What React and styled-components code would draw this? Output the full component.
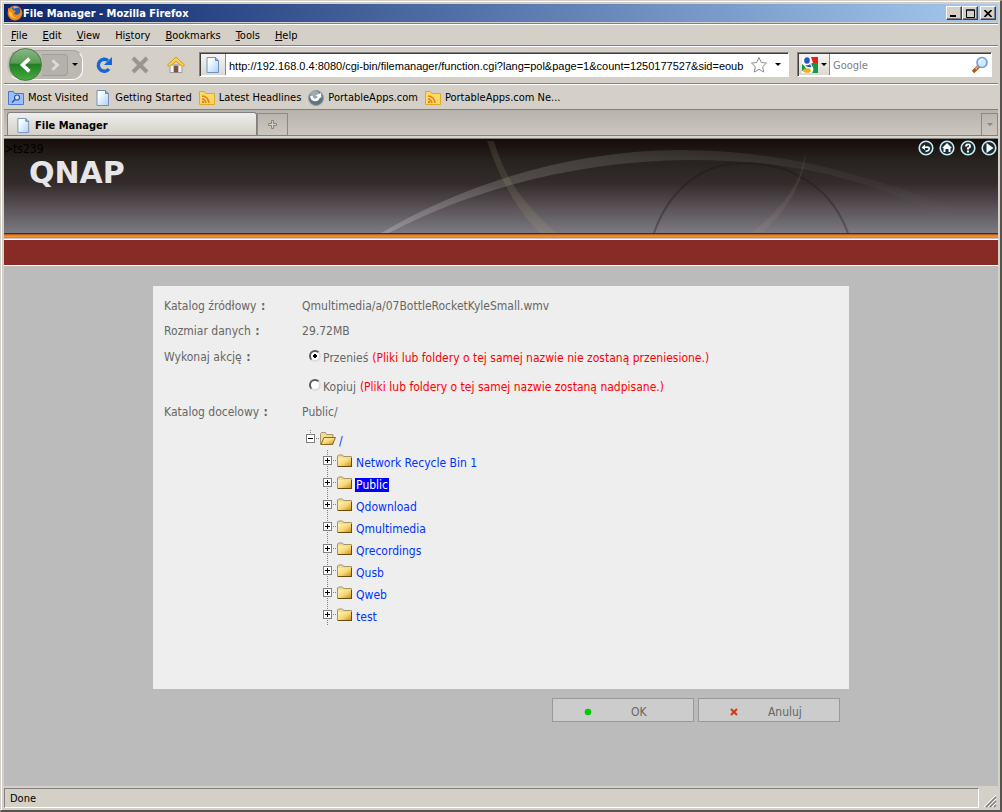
import { useState } from "react";
import styled, { createGlobalStyle } from "styled-components";

const GlobalStyle = createGlobalStyle`
  * {
    box-sizing: border-box;
  }

  body {
    margin: 0;
    background-color: #d4d0c8;
    font-family: "DejaVu Sans Condensed", "DejaVu Sans", sans-serif;
    font-size: 11px;
    color: #000;
  }

  button,
  input {
    font: inherit;
    color: inherit;
    margin: 0;
    padding: 0;
  }

  button {
    border: none;
    background: none;
  }

  svg {
    display: block;
    flex: none;
  }
`;

const Window = styled.div`
  min-height: 100vh;
  display: flex;
  flex-direction: column;
  padding: 3px 2px 2px 3px;
  background-color: #d4d0c8;
  border-style: solid;
  border-width: 1px 2px 2px 1px;
  border-color: #d4d0c8 #55524f #55524f #d4d0c8;
  box-shadow: inset 1px 1px 0 #fff;
`;

const TitleBar = styled.header`
  height: 18px;
  display: flex;
  align-items: center;
  padding: 0 2px 0 3px;
  background: linear-gradient(to right, #0a246a, #a6caf0);
`;

const Title = styled.h1`
  flex: 1;
  margin: 0;
  font-size: 11px;
  font-weight: bold;
  color: #fff;
`;

const CaptionButton = styled.button`
  width: 16px;
  height: 14px;
  display: grid;
  place-items: center;
  background-color: #d4d0c8;
  border: 1px solid;
  border-color: #fff #404040 #404040 #fff;
  box-shadow: inset -1px -1px 0 #808080;
  margin-left: ${(props) => (props.$apart ? "2px" : "0")};
`;

const Bar = styled.div`
  display: flex;
  align-items: center;
  border-bottom: 1px solid #808080;
  box-shadow: inset 0 1px 0 #fff;
`;

const MenuBar = styled(Bar)`
  height: 23px;
  margin-top: 1px;
  padding: 2px 0 0 7px;
  gap: 15px;
  border-top: 1px solid #808080;
`;

const MenuItem = styled.button`
  &::first-letter {
    text-decoration: underline;
  }
`;

const NavBar = styled(Bar)`
  height: 38px;
  padding: 0 6px 0 3px;
`;

const BackForward = styled.div`
  width: 76px;
  height: 30px;
  display: flex;
  align-items: center;
  background-color: #bcb8b2;
  border: 1px solid;
  border-color: #a5a29c #fff #fff #c8c4bc;
  border-radius: 14px 10px 10px 14px;
`;

const BackButton = styled.button`
  width: 33px;
  height: 33px;
  flex: none;
  display: grid;
  place-items: center;
  margin-left: 1px;
  border: 1px solid #467a45;
  border-radius: 50%;
  background: linear-gradient(#88b884, #5a9b56 45%, #237f22 50%, #43ab40);
`;

const ForwardButton = styled.button`
  width: 26px;
  height: 22px;
  display: grid;
  place-items: center;
  background-color: #b4b0aa;
  border: 1px solid #a19e98;
  border-left: none;
  border-radius: 0 4px 4px 0;
`;

const DropButton = styled.button`
  width: ${(props) => props.$width || 14}px;
  height: 22px;
  display: grid;
  place-items: center;
`;

const ToolGroup = styled.div`
  display: flex;
  gap: 16px;
  margin: 0 13px 0 11px;
`;

const ToolButton = styled.button`
  width: 20px;
  height: 20px;
  display: grid;
  place-items: center;
`;

const Field = styled.div`
  height: 25px;
  display: flex;
  align-items: center;
  background-color: #fff;
  border: 1px solid;
  border-color: #808080 #fff #fff #808080;
  box-shadow: inset 1px 1px 0 #404040;
`;

const AddressField = styled(Field)`
  flex: 1;
  margin-right: 8px;
`;

const SearchField = styled(Field)`
  width: 195px;
  padding-right: 2px;
`;

const FieldIcon = styled.div`
  height: 21px;
  width: ${(props) => props.$width}px;
  display: flex;
  flex: none;
  align-items: center;
  justify-content: center;
  gap: 3px;
  margin-left: 1px;
  background: linear-gradient(#f5f4f2, #dcd9d4);
  border-right: 1px solid #8c8984;
`;

const TextInput = styled.input`
  flex: 1;
  min-width: 0;
  border: none;
  outline: none;
  background: transparent;
  padding: 2px 3px 0;

  &::placeholder {
    color: #808080;
    opacity: 1;
  }
`;

const AddressInput = styled(TextInput)`
  font-family: "Liberation Sans", sans-serif;
`;

const BookmarkBar = styled(Bar)`
  height: 26px;
  padding: 2px 0 0 4px;
  gap: 7px;
`;

const Bookmark = styled.a`
  display: flex;
  align-items: center;
  gap: 4px;
  color: #000;
  text-decoration: none;
`;

const TabStrip = styled.div`
  height: 26px;
  display: flex;
  align-items: flex-end;
  padding-left: 3px;
  background: linear-gradient(#b7b3ac, #cbc7bf);
  border-bottom: 1px solid #808080;
`;

const Tab = styled.div`
  width: 250px;
  height: 23px;
  display: flex;
  align-items: center;
  gap: 4px;
  padding: 2px 0 0 8px;
  font-weight: bold;
  background: linear-gradient(#efeeec, #d4d0c8);
  border: 1px solid #808080;
  border-bottom: none;
  border-radius: 3px 3px 0 0;
`;

const TabButton = styled.button`
  width: ${(props) => props.$width}px;
  height: 22px;
  display: grid;
  place-items: center;
  border: 1px solid #8c8984;
  border-bottom: none;
  margin-left: ${(props) => (props.$end ? "auto" : "0")};
`;

const TabEdge = styled.div`
  height: 3px;
  background-color: #d8d5cf;
  border-bottom: 1px solid #808080;
`;

const Page = styled.main`
  flex: 1;
  background-color: #bbb;
  font-size: 12px;
  color: #666;
`;

const Banner = styled.div`
  height: 95px;
  display: grid;
  background: linear-gradient(#160b09, #26221e 22%, #342c2c 48%, #5c555a 75%, #7c7a82);
  border-bottom: 1px solid #30302f;
  overflow: hidden;

  > * {
    grid-area: 1 / 1;
  }
`;

const BannerContent = styled.div`
  z-index: 1;
  display: flex;
  justify-content: space-between;
  align-items: flex-start;
  padding: 1px 1px 0 0;
`;

const HostName = styled.div`
  height: 16px;
  line-height: 18px;
  color: #000;
`;

const Logo = styled.div`
  padding-left: 25px;
  font-family: "DejaVu Sans", sans-serif;
  font-size: 30px;
  font-weight: bold;
  line-height: 33px;
  color: #e6e6e8;
`;

const Shortcuts = styled.nav`
  display: flex;
  gap: 5px;
`;

const OrangeRule = styled.div`
  height: 6px;
  background: linear-gradient(#b4622c 0 1px, #ef7a20 1px 2px, #f89028 2px 3px, #b98a68 3px 4px, #c8c4d4 4px 5px, #fff 5px);
`;

const RedBar = styled.div`
  height: 26px;
  background-color: #882b26;
  border-bottom: 1px solid #fff;
`;

const Content = styled.form`
  width: 70%;
  min-width: 560px;
  margin: 20px auto 0;
`;

const Panel = styled.div`
  min-height: 403px;
  padding: 8px 11px;
  background-color: #eee;
`;

const Row = styled.div`
  display: grid;
  grid-template-columns: 138px 1fr;
  line-height: ${(props) => props.$line || 25}px;
`;

const Colon = styled.b`
  margin-left: 1px;
  font-weight: bold;
`;

const Option = styled.label`
  display: flex;
  align-items: center;
  height: 29px;
  padding-left: 7px;
`;

const Radio = styled.input`
  appearance: none;
  width: 12px;
  height: 12px;
  margin: 0 2px 6px 0;
  border-radius: 50%;
  border: 2px solid;
  border-color: #5a5a5a #e0ddd8 #e0ddd8 #5a5a5a;
  background-color: #fff;

  &:checked {
    background-image: radial-gradient(circle, #000 0 2px, transparent 2px);
  }
`;

const Warning = styled.span`
  margin-left: 4px;
  color: #f00;
`;

const Tree = styled.ul`
  list-style: none;
  margin: ${(props) => (props.$nested ? "0 0 0 17px" : "5px 0 0")};
  padding: 0;
`;

const TreeRow = styled.div`
  height: 22px;
  display: flex;
  align-items: center;
`;

const FolderLink = styled.a`
  margin: 4px 0 0 2px;
  padding: 0 1px;
  line-height: 14px;
  text-decoration: none;
  color: ${(props) => (props.$selected ? "#fff" : "#03f")};
  background-color: ${(props) => (props.$selected ? "#00f" : "transparent")};
`;

const Actions = styled.div`
  display: flex;
  justify-content: flex-end;
  gap: 4px;
  padding: 9px 9px 0 0;
`;

const ActionButton = styled.button`
  width: 142px;
  height: 24px;
  display: grid;
  grid-template-columns: 70px 32px;
  align-items: center;
  justify-items: center;
  padding-top: 3px;
  color: #666;
  background-color: #ccc;
  border: 1px solid #999;
`;

const StatusBar = styled.footer`
  display: flex;
  align-items: flex-end;
  padding-top: 2px;
`;

const StatusText = styled.div`
  flex: 1;
  height: 20px;
  line-height: 20px;
  padding-left: 5px;
  border: 1px solid;
  border-color: #808080 #fff #fff #808080;
`;

const FirefoxIcon = () => (
  <svg width="16" height="16" viewBox="0 0 16 16">
    <circle cx="8" cy="8" r="7.5" fill="#d9621a" />
    <circle cx="8.5" cy="6.5" r="5" fill="#2c5aa8" />
    <path d="M6 2q3-2 6 1-3-1-5 1z" fill="#8fc3ea" />
    <path d="M1 3l2 1 1-2 2 3 3 1-2 2q1 3 5 1 2-2 1-5 3 4 1 7-3 5-8 4-5-2-5-8z" fill="#f08a1c" />
    <path d="M2 6l3 2q0 4 5 5-6 1-8-4z" fill="#fbc83a" />
  </svg>
);

const PageIcon = ({ size = 16 }) => (
  <svg width={size} height={size} viewBox="0 0 16 16">
    <defs>
      <linearGradient id="paper" x2="1" y2="1">
        <stop offset="0.2" stopColor="#fff" />
        <stop offset="1" stopColor="#a9d0fa" />
      </linearGradient>
    </defs>
    <path d="M2 .5h8.500l3 3v12H2z" fill="url(#paper)" stroke="#7192bd" />
    <path d="M10.500.5v3h3" fill="#8bb1e0" stroke="#6184b6" />
  </svg>
);

const FeedIcon = () => (
  <svg width="16" height="15" viewBox="0 0 16 15">
    <path d="M.5 1.500h5l1 2h9v11H.5z" fill="#fcd968" stroke="#e0aa24" />
    <path d="M3 6q6 0 7 7M3 9q3 0 4 4" fill="none" stroke="#e98117" strokeWidth="1.700" />
    <circle cx="4" cy="12" r="1.200" fill="#e98117" />
  </svg>
);

const SmartFolderIcon = () => (
  <svg width="16" height="15" viewBox="0 0 16 15">
    <path d="M.5 1.500h5l1 2h9v11H.5z" fill="#9cc0f6" stroke="#4b79ce" />
    <circle cx="9" cy="7.500" r="2.500" fill="#d5e6ff" stroke="#2854b0" strokeWidth="1.200" />
    <path d="M7 9.500l-3 3" stroke="#2854b0" strokeWidth="1.500" />
  </svg>
);

const PortableIcon = () => (
  <svg width="16" height="16" viewBox="0 0 16 16">
    <circle cx="8" cy="8" r="7.500" fill="#5e757c" stroke="#8ea1a6" />
    <circle cx="7" cy="6" r="5" fill="#b7c4c8" opacity="0.700" />
    <path d="M3.500 6q0 4 3.500 4 3.500 0 4-4" fill="none" stroke="#fff" strokeWidth="2.400" />
    <path d="M7.500 5.500L13 3l.5 5z" fill="#fff" />
  </svg>
);

const ReloadIcon = () => (
  <svg width="18" height="18" viewBox="0 0 18 18">
    <path d="M13 4.500A6 6 0 1 0 14 13" fill="none" stroke="#1765d6" strokeWidth="3.400" />
    <path d="M17 1v8H9z" fill="#1765d6" />
  </svg>
);

const HomeIcon = () => (
  <svg width="20" height="18" viewBox="0 0 20 18">
    <path d="M4 9h12v7.500H4z" fill="#f5f3f0" stroke="#9b9b9b" />
    <path d="M8 10h4v6H8z" fill="#8b4c24" stroke="#667" strokeWidth="0.700" />
    <path d="M10 1l8.500 8-2 1.500L10 5l-6.500 5.500-2-1.500z" fill="#ffd44c" stroke="#d59b16" />
  </svg>
);

const GoogleIcon = () => (
  <svg width="16" height="16" viewBox="0 0 16 16">
    <path d="M0 0h16v16H0z" fill="#fff" />
    <path d="M9 0h7v6h-5z" fill="#e8201a" />
    <path d="M9.500 6H16v10h-6q3-4-.5-8z" fill="#159a3f" />
    <path d="M0 7q4 3 4 5l-4 2z" fill="#159a3f" />
    <ellipse cx="5" cy="3.500" rx="2.800" ry="3.300" fill="#2056c8" />
    <path d="M3 8q4 1 5-1l1.500 3q-4 1-6.500-2z" fill="#2056c8" />
    <ellipse cx="5" cy="13.500" rx="3.800" ry="2.300" fill="#f1ae19" />
  </svg>
);

const MagnifierIcon = () => (
  <svg width="18" height="18" viewBox="0 0 18 18">
    <path d="M8 10l-6 6" stroke="#a35e2a" strokeWidth="3.500" />
    <path d="M7.500 10l-3 3" stroke="#f2a14c" strokeWidth="2" />
    <circle cx="11" cy="6.500" r="5" fill="#cfe9ff" stroke="#6c9dda" strokeWidth="1.600" />
    <path d="M8 6q1-3 4-3" fill="none" stroke="#fff" />
  </svg>
);

const Arrow = ({ color = "#000" }) => (
  <svg width="6" height="3" viewBox="0 0 6 3">
    <path d="M0 0h6L3 3z" fill={color} />
  </svg>
);

const Chevron = ({ left, size }) => (
  <svg width={size} height={size} viewBox="0 0 14 14">
    <path
      d={left ? "M10 1.500L4 7l6 5.500" : "M4 1.500L10 7l-6 5.500"}
      fill="none"
      stroke={left ? "#fff" : "#dedbd6"}
      strokeWidth="3.200"
    />
  </svg>
);

const BannerCurves = () => (
  <svg width="100%" height="94" viewBox="4 139 994 94" preserveAspectRatio="xMidYMid slice">
    <defs>
      <linearGradient id="sweep">
        <stop offset="0" stopColor="#fff" stopOpacity="0.200" />
        <stop offset="0.500" stopColor="#fff" stopOpacity="0.100" />
        <stop offset="1" stopColor="#fff" stopOpacity="0" />
      </linearGradient>
    </defs>
    <path
      d="M381 233C470 180 580 150 680 150C790 150 880 180 960 210L925 208C860 178 790 160 690 160C590 160 480 185 389 233Z"
      fill="url(#sweep)"
    />
    <path d="M487 141C498 175 515 208 540 233H556C525 205 505 180 494 141Z" fill="#a9a57c" opacity="0.160" />
    <path d="M654 233C672 182 710 163 742 163C790 163 830 185 848 233" fill="none" stroke="#1c1516" strokeWidth="2" opacity="0.350" />
    <path d="M805 155C800 187 778 212 751 233H762C785 211 801 190 806 155Z" fill="#a9a58c" opacity="0.120" />
  </svg>
);

const shortcutPaths = {
  Back: "M3.500 7.500L7 4.500v2q5.500-1 5 2.500-.5 3-4.500 3v-1.500q3-.3 3-1.800 0-1-3.500-.7v2z",
  Home: "M3 8l5-5 5 5h-1.500v4h-2V9h-3v3h-2V8z",
  Help: "M5 6.500q0-3 3-3t3 2.500-2 2.500v1H7v-2q2 0 2-1.500t-1-.8-1 1.300zM7 10.500h2v2H7z",
  Logout: "M5.500 3l7 5-7 5z",
};

const ShortcutIcon = ({ name }) => (
  <svg width="16" height="16" viewBox="0 0 16 16">
    <circle cx="8" cy="8" r="6.800" fill="#20282b" stroke="#bfeef6" strokeWidth="1.600" />
    <path d={shortcutPaths[name]} fill="#f2fdff" />
  </svg>
);

const FolderIcon = ({ open }) => (
  <svg width="16" height="14" viewBox="0 0 16 14">
    <defs>
      <linearGradient id="folder" x2="1" y2="1">
        <stop offset="0" stopColor="#fff3b8" />
        <stop offset="0.500" stopColor="#f8d878" />
        <stop offset="1" stopColor="#c98a10" />
      </linearGradient>
    </defs>
    <path
      d={open ? "M.5 12.500v-11l1-1h4l1 2H13v10z" : "M.5 12.500V2l1-1h4l1 1.500h8v10z"}
      fill="#f2dc94"
      stroke="#a89468"
    />
    {open ? (
      <path d="M1 12.500l3-7h11.500l-3 7z" fill="url(#folder)" stroke="#8a6a22" />
    ) : (
      <>
        <path d="M1 4h13.500v8.500H1z" fill="url(#folder)" />
        <path d="M1 12.500h14M14.500 4v9" stroke="#6b4c0c" fill="none" />
      </>
    )}
  </svg>
);

const ToggleIcon = ({ open }) => (
  <svg width="18" height="22" viewBox="0 0 18 22" shapeRendering="crispEdges">
    <path d={open ? "M8.500 2v5" : "M8.500 0v22"} stroke="#808080" strokeDasharray="1 1" />
    <path d="M14 10.500h4" stroke="#808080" strokeDasharray="1 1" />
    <path d="M4.500 6.500h8v8h-8z" fill="#fff" stroke="#808080" />
    <path d={open ? "M6 10.500h5" : "M6 10.500h5M8.500 8v5"} stroke="#000" />
  </svg>
);

const bookmarks = [
  { name: "Most Visited", icon: <SmartFolderIcon /> },
  { name: "Getting Started", icon: <PageIcon /> },
  { name: "Latest Headlines", icon: <FeedIcon /> },
  { name: "PortableApps.com", icon: <PortableIcon /> },
  { name: "PortableApps.com Ne...", icon: <FeedIcon /> },
];

const folders = [
  "Network Recycle Bin 1",
  "Public",
  "Qdownload",
  "Qmultimedia",
  "Qrecordings",
  "Qusb",
  "Qweb",
  "test",
];

const BrowserChrome = () => (
  <>
    <TitleBar>
      <FirefoxIcon />
      <Title>File Manager - Mozilla Firefox</Title>
      <CaptionButton aria-label="Minimize">
        <svg width="8" height="8">
          <path d="M0 6h6v2H0z" />
        </svg>
      </CaptionButton>
      <CaptionButton aria-label="Maximize">
        <svg width="9" height="9">
          <path d="M.5 1h8v7.500h-8zM0 1h9" fill="none" stroke="#000" />
        </svg>
      </CaptionButton>
      <CaptionButton $apart aria-label="Close">
        <svg width="8" height="7">
          <path d="M.5 0l7 7M7.500 0l-7 7" stroke="#000" strokeWidth="1.600" />
        </svg>
      </CaptionButton>
    </TitleBar>
    <MenuBar as="nav">
      <MenuItem>File</MenuItem>
      <MenuItem>Edit</MenuItem>
      <MenuItem>View</MenuItem>
      <button>
        Hi<u>s</u>tory
      </button>
      <MenuItem>Bookmarks</MenuItem>
      <MenuItem>Tools</MenuItem>
      <MenuItem>Help</MenuItem>
    </MenuBar>
    <NavBar>
      <BackForward>
        <BackButton aria-label="Back">
          <Chevron left size={16} />
        </BackButton>
        <ForwardButton aria-label="Forward">
          <Chevron size={12} />
        </ForwardButton>
        <DropButton aria-label="Recent pages">
          <Arrow />
        </DropButton>
      </BackForward>
      <ToolGroup>
        <ToolButton aria-label="Reload">
          <ReloadIcon />
        </ToolButton>
        <ToolButton aria-label="Stop">
          <svg width="18" height="18">
            <path d="M2 2l14 14M16 2L2 16" stroke="#99958f" strokeWidth="4" />
          </svg>
        </ToolButton>
        <ToolButton aria-label="Home">
          <HomeIcon />
        </ToolButton>
      </ToolGroup>
      <AddressField>
        <FieldIcon $width={25}>
          <PageIcon />
        </FieldIcon>
        <AddressInput
          aria-label="Location"
          defaultValue="http://192.168.0.4:8080/cgi-bin/filemanager/function.cgi?lang=pol&page=1&count=1250177527&sid=eoub"
        />
        <svg width="18" height="18" viewBox="0 0 18 18">
          <path
            d="M9 1.500l2.300 5 5.200.600-3.800 3.600 1 5.300L9 13.400 4.300 16l1-5.300L1.500 7.100l5.200-.600z"
            fill="#fff"
            stroke="#8b8b8b"
          />
        </svg>
        <DropButton $width={20} aria-label="History">
          <Arrow />
        </DropButton>
      </AddressField>
      <SearchField>
        <FieldIcon $width={31}>
          <GoogleIcon />
          <Arrow />
        </FieldIcon>
        <TextInput aria-label="Search" placeholder="Google" />
        <MagnifierIcon />
      </SearchField>
    </NavBar>
    <BookmarkBar as="nav">
      {bookmarks.map(({ name, icon }) => (
        <Bookmark key={name} href="#">
          {icon}
          {name}
        </Bookmark>
      ))}
    </BookmarkBar>
    <TabStrip>
      <Tab>
        <PageIcon size={15} />
        File Manager
      </Tab>
      <TabButton $width={31} aria-label="New tab">
        <svg width="9" height="9">
          <path d="M3.500.5h2v3h3v2h-3v3h-2v-3h-3v-2h3z" fill="#d4d0c8" stroke="#88857f" />
        </svg>
      </TabButton>
      <TabButton $width={17} $end aria-label="List all tabs">
        <Arrow color="#88857f" />
      </TabButton>
    </TabStrip>
    <TabEdge />
  </>
);

const FolderItem = ({ name, selected, onSelect }) => (
  <li>
    <TreeRow>
      <button type="button" aria-label={`Expand ${name}`}>
        <ToggleIcon />
      </button>
      <FolderIcon />
      <FolderLink href="#" $selected={selected} onClick={() => onSelect(name)}>
        {name}
      </FolderLink>
    </TreeRow>
  </li>
);

const App = () => {
  const [target, setTarget] = useState("Public");

  return (
    <>
      <GlobalStyle />
      <Window>
        <BrowserChrome />
        <Page>
          <Banner>
            <BannerCurves />
            <BannerContent>
              <div>
                <HostName>&gt;ts239</HostName>
                <Logo>QNAP</Logo>
              </div>
              <Shortcuts>
                {Object.keys(shortcutPaths).map((name) => (
                  <a key={name} href="#" aria-label={name}>
                    <ShortcutIcon name={name} />
                  </a>
                ))}
              </Shortcuts>
            </BannerContent>
          </Banner>
          <OrangeRule />
          <RedBar />
          <Content onSubmit={(e) => e.preventDefault()}>
            <Panel>
              <Row>
                <span>
                  Katalog źródłowy <Colon>:</Colon>
                </span>
                <span>Qmultimedia/a/07BottleRocketKyleSmall.wmv</span>
              </Row>
              <Row>
                <span>
                  Rozmiar danych <Colon>:</Colon>
                </span>
                <span>29.72MB</span>
              </Row>
              <Row $line={27} role="radiogroup" aria-labelledby="action">
                <span id="action">
                  Wykonaj akcję <Colon>:</Colon>
                </span>
                <div>
                  <Option>
                    <Radio type="radio" name="action" defaultChecked />
                    Przenieś
                    <Warning>(Pliki lub foldery o tej samej nazwie nie zostaną przeniesione.)</Warning>
                  </Option>
                  <Option>
                    <Radio type="radio" name="action" />
                    Kopiuj
                    <Warning>(Pliki lub foldery o tej samej nazwie zostaną nadpisane.)</Warning>
                  </Option>
                </div>
              </Row>
              <Row $line={21}>
                <span>
                  Katalog docelowy <Colon>:</Colon>
                </span>
                <div>
                  {target}/
                  <Tree>
                    <li>
                      <TreeRow>
                        <button type="button" aria-label="Collapse /">
                          <ToggleIcon open />
                        </button>
                        <FolderIcon open />
                        <FolderLink href="#">/</FolderLink>
                      </TreeRow>
                      <Tree $nested>
                        {folders.map((name) => (
                          <FolderItem key={name} name={name} selected={name === target} onSelect={setTarget} />
                        ))}
                      </Tree>
                    </li>
                  </Tree>
                </div>
              </Row>
            </Panel>
            <Actions>
              <ActionButton type="submit">
                <svg width="8" height="8">
                  <circle cx="4" cy="4" r="3.300" fill="#0c0" />
                </svg>
                OK
              </ActionButton>
              <ActionButton type="button">
                <svg width="8" height="8">
                  <path d="M1 1l6 6M7 1L1 7" stroke="#d4380e" strokeWidth="2" />
                </svg>
                Anuluj
              </ActionButton>
            </Actions>
          </Content>
        </Page>
        <StatusBar>
          <StatusText>Done</StatusText>
          <svg width="19" height="14">
            <path d="M5 13L17 1M9 13l8-8M13 13l4-4" stroke="#fff" />
            <path d="M7 13L17 3M11 13l6-6M15 13l2-2" stroke="#808080" strokeWidth="1.500" />
          </svg>
        </StatusBar>
      </Window>
    </>
  );
};

export default App;
